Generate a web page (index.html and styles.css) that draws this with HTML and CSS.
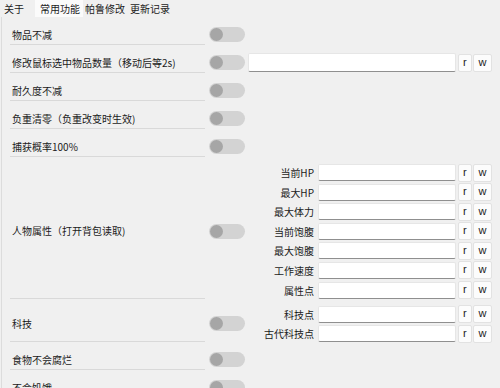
FILE: index.html
```html
<!DOCTYPE html>
<html lang="zh-CN">
<head>
<meta charset="utf-8">
<title>常用功能</title>
<link rel="stylesheet" href="styles.css">
</head>
<body>
<div class="tabs">
  <span class="tab t-about">关于</span>
  <span class="tab active">常用功能</span>
  <span class="tab t-pal">帕鲁修改</span>
  <span class="tab t-log">更新记录</span>
</div>
<div class="panel">
  <div class="row">
    <div class="label">物品不减</div>
    <div class="tog"><span class="switch"></span></div>
    <div class="right"></div>
  </div>
  <div class="row">
    <div class="label">修改鼠标选中物品数量（移动后等2s)</div>
    <div class="tog"><span class="switch"></span></div>
    <div class="right single">
      <div class="field nolabel"><input class="box" type="text"><button class="btn">r</button><button class="btn">w</button></div>
    </div>
  </div>
  <div class="row">
    <div class="label">耐久度不减</div>
    <div class="tog"><span class="switch"></span></div>
    <div class="right"></div>
  </div>
  <div class="row">
    <div class="label">负重清零（负重改变时生效)</div>
    <div class="tog"><span class="switch"></span></div>
    <div class="right"></div>
  </div>
  <div class="row">
    <div class="label">捕获概率100%</div>
    <div class="tog"><span class="switch"></span></div>
    <div class="right"></div>
  </div>
  <div class="row">
    <div class="label">人物属性（打开背包读取)</div>
    <div class="tog"><span class="switch"></span></div>
    <div class="right">
      <div class="field"><span class="fl">当前HP</span><input class="box" type="text"><button class="btn">r</button><button class="btn">w</button></div>
      <div class="field"><span class="fl">最大HP</span><input class="box" type="text"><button class="btn">r</button><button class="btn">w</button></div>
      <div class="field"><span class="fl">最大体力</span><input class="box" type="text"><button class="btn">r</button><button class="btn">w</button></div>
      <div class="field"><span class="fl">当前饱腹</span><input class="box" type="text"><button class="btn">r</button><button class="btn">w</button></div>
      <div class="field"><span class="fl">最大饱腹</span><input class="box" type="text"><button class="btn">r</button><button class="btn">w</button></div>
      <div class="field"><span class="fl">工作速度</span><input class="box" type="text"><button class="btn">r</button><button class="btn">w</button></div>
      <div class="field"><span class="fl">属性点</span><input class="box" type="text"><button class="btn">r</button><button class="btn">w</button></div>
    </div>
  </div>
  <div class="row">
    <div class="label">科技</div>
    <div class="tog"><span class="switch"></span></div>
    <div class="right">
      <div class="field"><span class="fl">科技点</span><input class="box" type="text"><button class="btn">r</button><button class="btn">w</button></div>
      <div class="field"><span class="fl">古代科技点</span><input class="box" type="text"><button class="btn">r</button><button class="btn">w</button></div>
    </div>
  </div>
  <div class="row">
    <div class="label">食物不会腐烂</div>
    <div class="tog"><span class="switch"></span></div>
    <div class="right"></div>
  </div>
  <div class="row">
    <div class="label">不会饥饿</div>
    <div class="tog"><span class="switch"></span></div>
    <div class="right"></div>
  </div>
</div>
</body>
</html>
```

FILE: styles.css
```css
html, body {
  margin: 0;
  padding: 0;
  background: #f0f0f0;
  overflow: hidden;
}
body {
  font-family: "Noto Sans CJK SC", "Noto Sans", sans-serif;
  font-size: 10px;
  color: #1b1b1b;
  width: 500px;
  height: 388px;
}
.tabs {
  display: flex;
  align-items: stretch;
  height: 17px;
}
.tab {
  display: flex;
  align-items: center;
  line-height: 1;
  padding-top: 1px;
}
.t-about { margin-left: 4px; }
.active {
  margin-left: 11px;
  padding-left: 5px;
  padding-right: 3px;
  background: #fbfbfb;
}
.t-pal { margin-left: 2px; }
.t-log { margin-left: 5px; }

.panel {
  margin-left: 1px;
  border-left: 1px solid #dcdcdc;
  padding-left: 8px;
  height: 371px;
}
.row {
  display: grid;
  grid-template-columns: 195px 40px 247px;
}
.label {
  display: flex;
  align-items: center;
  padding: 7px 0 0 2px;
  min-height: 20px;
  border-bottom: 1px solid #d9d9d9;
}
.tog {
  display: flex;
  align-items: center;
  padding: 7px 0 0 4px;
  min-height: 20px;
}
.switch {
  position: relative;
  display: block;
  width: 36px;
  height: 15px;
  border-radius: 8px;
  background: #d3d3d3;
}
.switch::before {
  content: "";
  position: absolute;
  left: 1px;
  top: 1px;
  width: 13px;
  height: 13px;
  border-radius: 50%;
  background: #a6a6a6;
}
.right {
  padding: 7px 0 0 3px;
  display: flex;
  flex-direction: column;
  gap: 2.6px;
}
.right.single {
  justify-content: center;
}
.field {
  display: flex;
  align-items: center;
  height: 17px;
}
.nolabel {
  height: 19px;
}
.fl {
  width: 66px;
  margin-right: 4px;
  text-align: right;
  white-space: nowrap;
}
.box {
  flex: 1;
  min-width: 0;
  height: 100%;
  box-sizing: border-box;
  margin: 0;
  padding: 0 4px;
  background: #ffffff;
  border: 1px solid #e6e6e6;
  border-bottom: 1px solid #8f8f8f;
  border-radius: 2px;
  outline: none;
}
.btn {
  height: 18px;
  box-sizing: border-box;
  margin: 0 0 0 1.5px;
  padding: 0 4px 1px;
  background: #fcfcfc;
  border: 1px solid #e2e2e2;
  border-radius: 2px;
  font-family: "Liberation Sans", Arial, sans-serif;
  font-size: 11px;
  color: #1b1b1b;
  line-height: 1;
}
.btn + .btn {
  padding: 0 4.5px 1px;
}
```
